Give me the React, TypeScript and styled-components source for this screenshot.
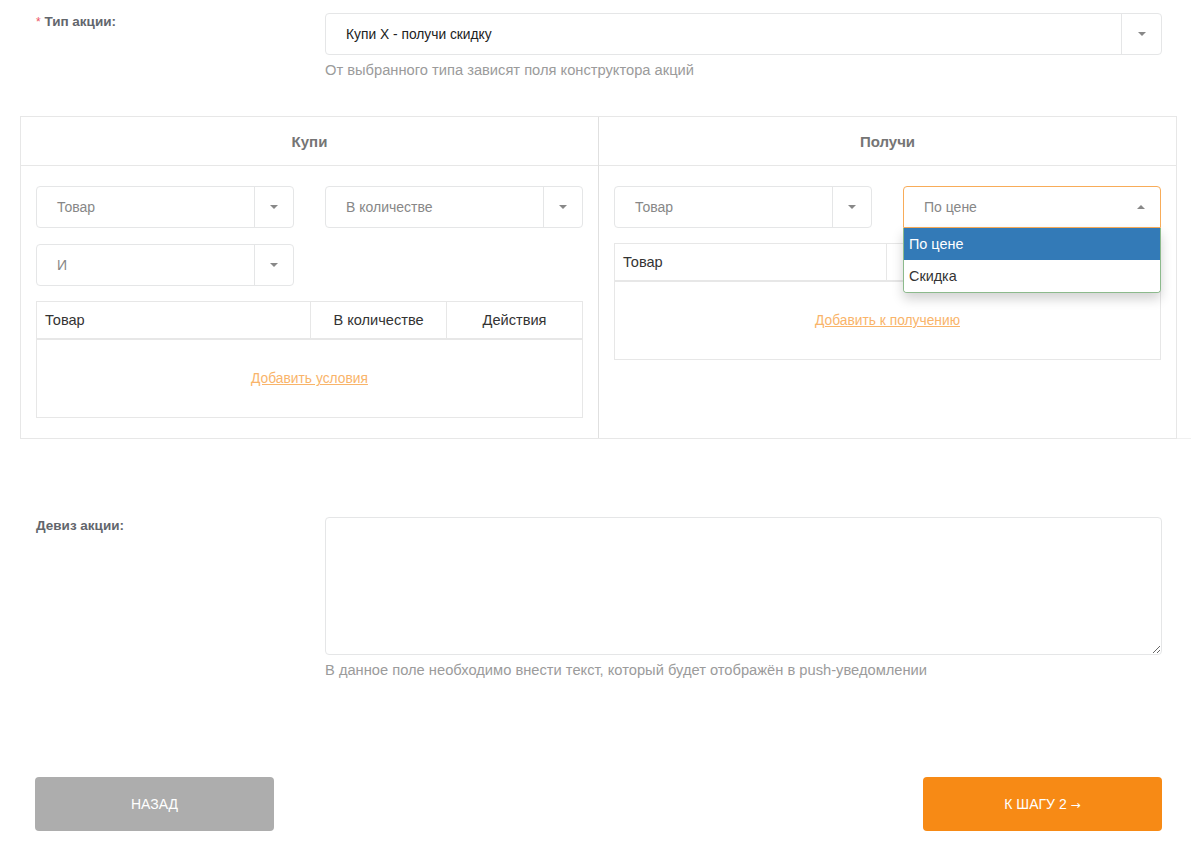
import styled, { createGlobalStyle } from 'styled-components'

const GlobalStyle = createGlobalStyle`
  html, body {
    margin: 0;
    padding: 0;
    background: #fff;
  }
  body {
    font-family: 'Liberation Sans', Arial, sans-serif;
    font-size: 14px;
    color: #333;
  }
  * {
    box-sizing: border-box;
  }
`

const App = () => {
  return (
    <Page>
      <GlobalStyle />
      <FormRow>
        <Label>
          <Required>*</Required> Тип акции:
        </Label>
        <Field>
          <Select $wide>
            <SelectValue $dark>Купи X - получи скидку</SelectValue>
            <SelectArrow $wide>
              <Caret />
            </SelectArrow>
          </Select>
          <Help>От выбранного типа зависят поля конструктора акций</Help>
        </Field>
      </FormRow>

      <Constructor>
        <Column>
          <ColumnHead>Купи</ColumnHead>
          <ColumnBody>
            <SelectGrid>
              <Select>
                <SelectValue>Товар</SelectValue>
                <SelectArrow>
                  <Caret />
                </SelectArrow>
              </Select>
              <Select>
                <SelectValue>В количестве</SelectValue>
                <SelectArrow>
                  <Caret />
                </SelectArrow>
              </Select>
              <Select>
                <SelectValue>И</SelectValue>
                <SelectArrow>
                  <Caret />
                </SelectArrow>
              </Select>
            </SelectGrid>
            <Table>
              <thead>
                <tr>
                  <Th $w={274}>Товар</Th>
                  <Th $w={136} $center>В количестве</Th>
                  <Th $center>Действия</Th>
                </tr>
              </thead>
              <tbody>
                <tr>
                  <EmptyCell colSpan={3}>
                    <AddLink href="#">Добавить условия</AddLink>
                  </EmptyCell>
                </tr>
              </tbody>
            </Table>
          </ColumnBody>
        </Column>

        <Column $last>
          <ColumnHead>Получи</ColumnHead>
          <ColumnBody>
            <SelectGrid>
              <Select>
                <SelectValue>Товар</SelectValue>
                <SelectArrow>
                  <Caret />
                </SelectArrow>
              </Select>
              <DropWrap>
                <Select $open>
                  <SelectValue>По цене</SelectValue>
                  <OpenArrow>
                    <Caret $up />
                  </OpenArrow>
                </Select>
                <Menu>
                  <Option $active>По цене</Option>
                  <Option>Скидка</Option>
                </Menu>
              </DropWrap>
            </SelectGrid>
            <Table>
              <thead>
                <tr>
                  <Th $w={272}>Товар</Th>
                  <Th $center>Цена</Th>
                </tr>
              </thead>
              <tbody>
                <tr>
                  <EmptyCell colSpan={2}>
                    <AddLink href="#">Добавить к получению</AddLink>
                  </EmptyCell>
                </tr>
              </tbody>
            </Table>
          </ColumnBody>
        </Column>
      </Constructor>

      <FormRow $spaced>
        <Label>Девиз акции:</Label>
        <Field>
          <TextArea />
          <Help>В данное поле необходимо внести текст, который будет отображён в push-уведомлении</Help>
        </Field>
      </FormRow>

      <Actions>
        <Button $variant="back">НАЗАД</Button>
        <Button $variant="next">
          К ШАГУ 2 <Arrow>→</Arrow>
        </Button>
      </Actions>
    </Page>
  )
}

export default App

const Page = styled.div`
  width: 1200px;
  padding: 13px 20px 18px 20px;
`

const FormRow = styled.div<{ $spaced?: boolean }>`
  display: flex;
  align-items: flex-start;
  margin-top: ${p => (p.$spaced ? '78px' : '0')};
`

const Label = styled.div`
  width: 305px;
  flex-shrink: 0;
  padding-left: 16px;
  font-size: 13.5px;
  line-height: 18px;
  font-weight: 700;
  color: #62666c;
`

const Required = styled.span`
  color: #ed5565;
  font-weight: 400;
  font-size: 12px;
`

const Field = styled.div`
  width: 837px;
  display: flex;
  flex-direction: column;
`

const Help = styled.div`
  margin-top: 7px;
  font-size: 14.7px;
  line-height: 16px;
  color: #9b9b9b;
`

const Select = styled.div<{ $wide?: boolean; $open?: boolean }>`
  display: flex;
  align-items: stretch;
  height: 42px;
  border: 1px solid ${p => (p.$open ? '#f8ac59' : '#e5e6e7')};
  border-radius: ${p => (p.$open ? '4px 4px 0 0' : '4px')};
  background: #fff;
`

const SelectValue = styled.div<{ $dark?: boolean }>`
  flex: 1;
  display: flex;
  align-items: center;
  padding-left: 20px;
  font-size: ${p => (p.$dark ? '13.8px' : '14px')};
  color: ${p => (p.$dark ? '#222' : '#878787')};
`

const SelectArrow = styled.div<{ $wide?: boolean }>`
  width: ${p => (p.$wide ? '40px' : '39px')};
  border-left: 1px solid #e5e6e7;
  display: flex;
  align-items: center;
  justify-content: center;
`

const OpenArrow = styled.div`
  width: 39px;
  display: flex;
  align-items: center;
  justify-content: center;
`

const Caret = styled.span<{ $up?: boolean }>`
  width: 0;
  height: 0;
  border-left: 4px solid transparent;
  border-right: 4px solid transparent;
  ${p =>
    p.$up ? 'border-bottom: 4px solid #888;' : 'border-top: 4px solid #888;'}
`

const Constructor = styled.div`
  position: relative;
  margin-top: 38px;
  display: flex;
  width: 1157px;
  border: 1px solid #e7e7e7;

  &::after {
    content: '';
    position: absolute;
    left: 1156px;
    bottom: -1px;
    width: 14px;
    border-bottom: 1px solid #f0f0f0;
  }
`

const Column = styled.div<{ $last?: boolean }>`
  width: ${p => (p.$last ? '578px' : '577px')};
  border-left: ${p => (p.$last ? '1px solid #e0e0e0' : 'none')};
  display: flex;
  flex-direction: column;
`

const ColumnHead = styled.div`
  height: 49px;
  display: flex;
  align-items: center;
  justify-content: center;
  border-bottom: 1px solid #e7e7e7;
  font-size: 15px;
  font-weight: 700;
  color: #757575;
`

const ColumnBody = styled.div`
  padding: 20px 15px 20px 15px;
  display: flex;
  flex-direction: column;
  gap: 15px;
  flex: 1;
`

const SelectGrid = styled.div`
  display: grid;
  grid-template-columns: 1fr 1fr;
  column-gap: 31px;
  row-gap: 16px;
`

const DropWrap = styled.div`
  position: relative;
`

const Menu = styled.div`
  position: absolute;
  top: 42px;
  left: 0;
  right: 0;
  z-index: 5;
  background: #fff;
  border: 1px solid #8cba8c;
  border-top: none;
  border-radius: 0 0 4px 4px;
  box-shadow: 0 6px 12px rgba(0, 0, 0, 0.175);
  overflow: hidden;
`

const Option = styled.div<{ $active?: boolean }>`
  height: 32px;
  display: flex;
  align-items: center;
  padding-left: 5px;
  font-size: 14.4px;
  color: ${p => (p.$active ? '#fff' : '#333')};
  background: ${p => (p.$active ? '#337ab7' : '#fff')};
`

const Table = styled.table`
  width: 100%;
  border-collapse: collapse;
  border: 1px solid #e7e7e7;
`

const Th = styled.th<{ $w?: number; $center?: boolean }>`
  height: 37px;
  width: ${p => (p.$w ? `${p.$w}px` : 'auto')};
  padding: 0 8px;
  border: 1px solid #e7e7e7;
  border-bottom-width: 2px;
  text-align: ${p => (p.$center ? 'center' : 'left')};
  font-size: 14.6px;
  font-weight: 400;
  color: #333;
`

const EmptyCell = styled.td`
  height: 79px;
  text-align: center;
  vertical-align: middle;
  border: 1px solid #e7e7e7;
`

const AddLink = styled.a`
  font-size: 13.8px;
  color: #f9b46a;
  text-decoration: underline;
`

const TextArea = styled.textarea`
  width: 837px;
  height: 138px;
  border: 1px solid #e5e6e7;
  border-radius: 4px;
  padding: 6px 12px;
  font-family: 'Liberation Sans', Arial, sans-serif;
  font-size: 14px;
  outline: none;
  resize: vertical;
`

const Actions = styled.div`
  margin-top: 99px;
  display: flex;
  justify-content: space-between;
  padding-left: 15px;
  width: 1142px;
`

const Button = styled.button<{ $variant: 'back' | 'next' }>`
  width: 239px;
  height: 54px;
  border: none;
  border-radius: 4px;
  font-family: 'Liberation Sans', Arial, sans-serif;
  font-size: 14px;
  color: #fff;
  cursor: pointer;
  background: ${p => (p.$variant === 'next' ? '#f78a15' : '#adadad')};
`

const Arrow = styled.span`
  font-family: 'DejaVu Sans', sans-serif;
  font-size: 12px;
`
